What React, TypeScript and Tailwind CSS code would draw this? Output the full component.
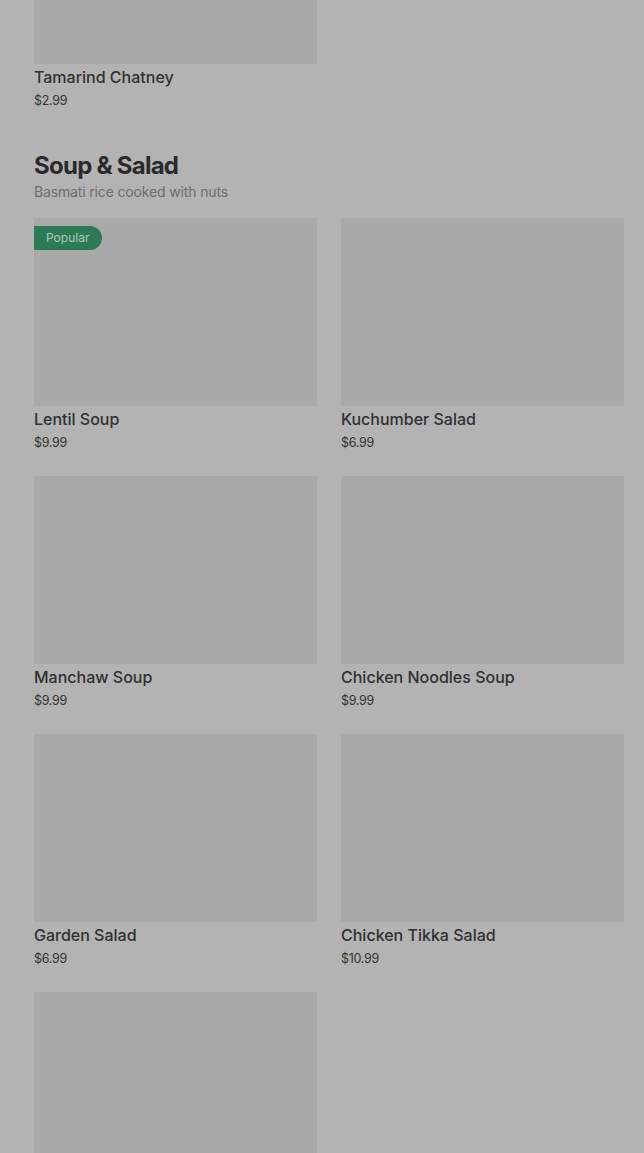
import React from "react";

type Item = { name: string; price: string; popular?: boolean };

const items: Item[] = [
  { name: "Lentil Soup", price: "$9.99", popular: true },
  { name: "Kuchumber Salad", price: "$6.99" },
  { name: "Manchaw Soup", price: "$9.99" },
  { name: "Chicken Noodles Soup", price: "$9.99" },
  { name: "Garden Salad", price: "$6.99" },
  { name: "Chicken Tikka Salad", price: "$10.99" },
  { name: "", price: "" },
];

function Card({ item }: { item: Item }) {
  return (
    <div className="flex flex-col">
      <div className="relative h-[188px] bg-[#a9a9a9]">
        {item.popular && (
          <span className="absolute left-0 top-[8px] flex h-[24px] items-center rounded-r-full bg-[#2f7a56] pl-[12px] pr-[13px] text-[12px] text-[#a9c9b6]">
            Popular
          </span>
        )}
      </div>
      {item.name && (
        <>
          <div className="mt-px text-[16px] font-medium leading-6 text-[#303030]">{item.name}</div>
          <div className="mt-[2px] text-[12.5px] leading-5 tracking-[-0.3px] text-[#333333]">{item.price}</div>
        </>
      )}
    </div>
  );
}

export default function App() {
  return (
    <div
      className="h-[1153px] w-[644px] overflow-hidden bg-[#b3b3b3] pl-[34px] pr-[20px]"
      style={{ fontFamily: "Inter, 'Noto Sans', sans-serif" }}
    >
      <div className="-mt-[124px] grid grid-cols-2 gap-x-[24px]">
        <div className="flex flex-col">
          <div className="h-[188px] bg-[#a9a9a9]" />
          <div className="mt-px text-[16px] font-medium leading-6 text-[#303030]">Tamarind Chatney</div>
          <div className="mt-[2px] text-[12.5px] leading-5 tracking-[-0.3px] text-[#333333]">$2.99</div>
        </div>
      </div>
      <div className="mt-[39px]">
        <h2 className="text-[24px] font-bold leading-8 tracking-[-0.75px] text-[#2a2a2a]">Soup &amp; Salad</h2>
        <p className="text-[14px] leading-5 tracking-[-0.15px] text-[#6e6e6e]">Basmati rice cooked with nuts</p>
      </div>
      <div className="mt-[16px] grid grid-cols-2 gap-x-[24px] gap-y-[23px]">
        {items.map((it, i) => (
          <Card key={i} item={it} />
        ))}
      </div>
    </div>
  );
}
